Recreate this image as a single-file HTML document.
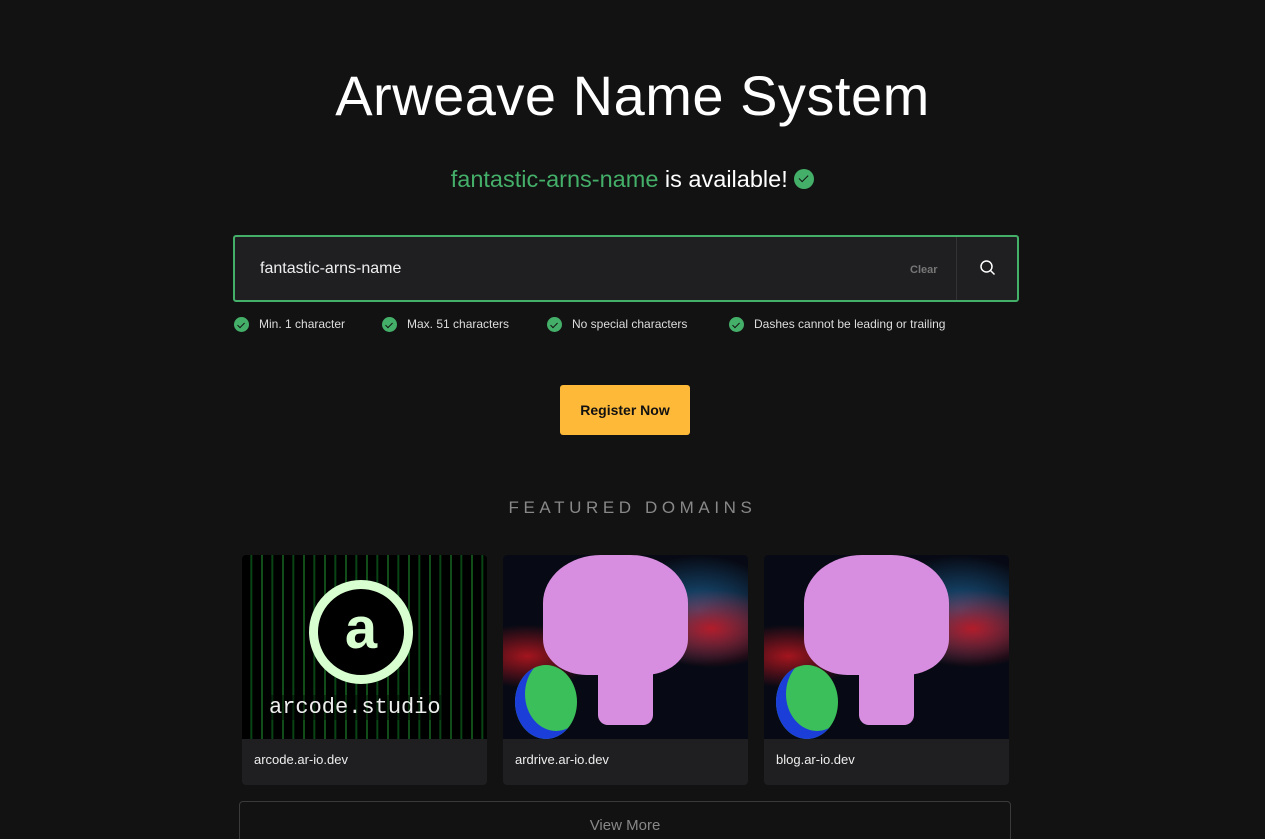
<!DOCTYPE html>
<html style="height:839px;overflow:hidden"><head><meta charset="utf-8"><style>
*{margin:0;padding:0;box-sizing:border-box}
body{width:1265px;height:839px;background:#121212;font-family:"Liberation Sans",sans-serif;color:#fff;position:relative;overflow:hidden}
.abs{position:absolute}
h1{position:absolute;top:63px;left:0;width:1265px;text-align:center;font-weight:400;font-size:56px;letter-spacing:0.5px}
.sub{top:166px;left:0;width:1265px;text-align:center;font-size:23.5px}
.chk{display:inline-block;border-radius:50%;background:#44af69;position:relative;vertical-align:middle}
.chk:after{content:"";position:absolute;left:36%;top:22%;width:22%;height:40%;border:solid #111;border-width:0 1.5px 1.5px 0;transform:rotate(45deg)}
.search{left:233px;top:235px;width:786px;height:67px;border:2px solid #44af69;border-radius:3px;background:#1f1f22}
.rules{top:317px;font-size:12px;color:#ddd}
.card{top:555px;width:245px;height:230px;background:#1f1f22;border-radius:4px;overflow:hidden}
.card .img{height:184px;position:relative;overflow:hidden}
.card .lbl{padding:13px 12px;font-size:13px;color:#eee}
.space{background:radial-gradient(ellipse at 85% 40%,#b21c2a 0,transparent 25%),radial-gradient(ellipse at 80% 30%,#1a5a8a 0,transparent 30%),radial-gradient(ellipse at 10% 55%,#a3151e 0,transparent 22%),#070a14}
</style></head><body>
<h1>Arweave Name System</h1>
<div class="abs sub"><span style="color:#44af69">fantastic-arns-name</span> is available! <span class="chk" style="width:20px;height:20px;margin-top:-4px"></span></div>
<div class="abs search">
<div class="abs" style="left:25px;top:23px;font-size:16px;color:#eee">fantastic-arns-name</div>
<div class="abs" style="left:675px;top:27px;font-size:11px;font-weight:bold;color:#777">Clear</div>
<div class="abs" style="left:721px;top:0;width:1px;height:63px;background:#333"></div>
<svg class="abs" style="left:744px;top:22px" width="18" height="18" viewBox="0 0 18 18"><circle cx="7.5" cy="7.5" r="5.5" fill="none" stroke="#fff" stroke-width="1.5"/><path d="M11.5 11.5l4 4" stroke="#fff" stroke-width="1.5"/></svg>
</div>
<div class="abs rules" style="left:234px"><span class="chk" style="width:15px;height:15px"></span>&nbsp;&nbsp;&nbsp;Min. 1 character</div>
<div class="abs rules" style="left:382px"><span class="chk" style="width:15px;height:15px"></span>&nbsp;&nbsp;&nbsp;Max. 51 characters</div>
<div class="abs rules" style="left:547px"><span class="chk" style="width:15px;height:15px"></span>&nbsp;&nbsp;&nbsp;No special characters</div>
<div class="abs rules" style="left:729px"><span class="chk" style="width:15px;height:15px"></span>&nbsp;&nbsp;&nbsp;Dashes cannot be leading or trailing</div>
<div class="abs" style="left:560px;top:385px;width:130px;height:50px;background:#ffb938;border-radius:3px;color:#111;font-weight:bold;font-size:14px;text-align:center;line-height:50px">Register Now</div>
<div class="abs" style="left:0;top:498px;width:1265px;text-align:center;font-size:17px;letter-spacing:4.6px;color:#888">FEATURED DOMAINS</div>
<div class="abs card" style="left:242px"><div class="img" style="background:repeating-linear-gradient(90deg,#000 0,#000 8px,#0c5a1c 9px,#000 11px,#000 19px,#1f9a30 20px,#000 21px)">
<div class="abs" style="left:67px;top:25px;width:104px;height:104px;border:9px solid #d8ffd0;border-radius:50%;background:#000;color:#d8ffd0;font-size:58px;font-weight:bold;text-align:center;line-height:80px">a</div>
<div class="abs" style="left:27px;top:140px;font-family:'Liberation Mono',monospace;font-size:22px;color:#eee;background:rgba(0,0,0,.4)">arcode.studio</div></div><div class="lbl">arcode.ar-io.dev</div></div>
<div class="abs card" style="left:503px"><div class="img space">
<div class="abs" style="left:40px;top:0;width:145px;height:120px;background:#d88ee0;border-radius:40% 40% 30% 30%"></div>
<div class="abs" style="left:95px;top:90px;width:55px;height:80px;background:#d88ee0;border-radius:10px"></div>
<div class="abs" style="left:12px;top:110px;width:62px;height:74px;background:#3bbf5a;border-radius:50%;box-shadow:inset 10px -8px 0 #1c3ed8"></div></div><div class="lbl">ardrive.ar-io.dev</div></div>
<div class="abs card" style="left:764px"><div class="img space">
<div class="abs" style="left:40px;top:0;width:145px;height:120px;background:#d88ee0;border-radius:40% 40% 30% 30%"></div>
<div class="abs" style="left:95px;top:90px;width:55px;height:80px;background:#d88ee0;border-radius:10px"></div>
<div class="abs" style="left:12px;top:110px;width:62px;height:74px;background:#3bbf5a;border-radius:50%;box-shadow:inset 10px -8px 0 #1c3ed8"></div></div><div class="lbl">blog.ar-io.dev</div></div>
<div class="abs" style="left:239px;top:801px;width:772px;height:50px;border:1px solid #3a3a3a;border-radius:4px;text-align:center;padding-top:15px;font-size:15px;color:#888">View More</div>
</body></html>
